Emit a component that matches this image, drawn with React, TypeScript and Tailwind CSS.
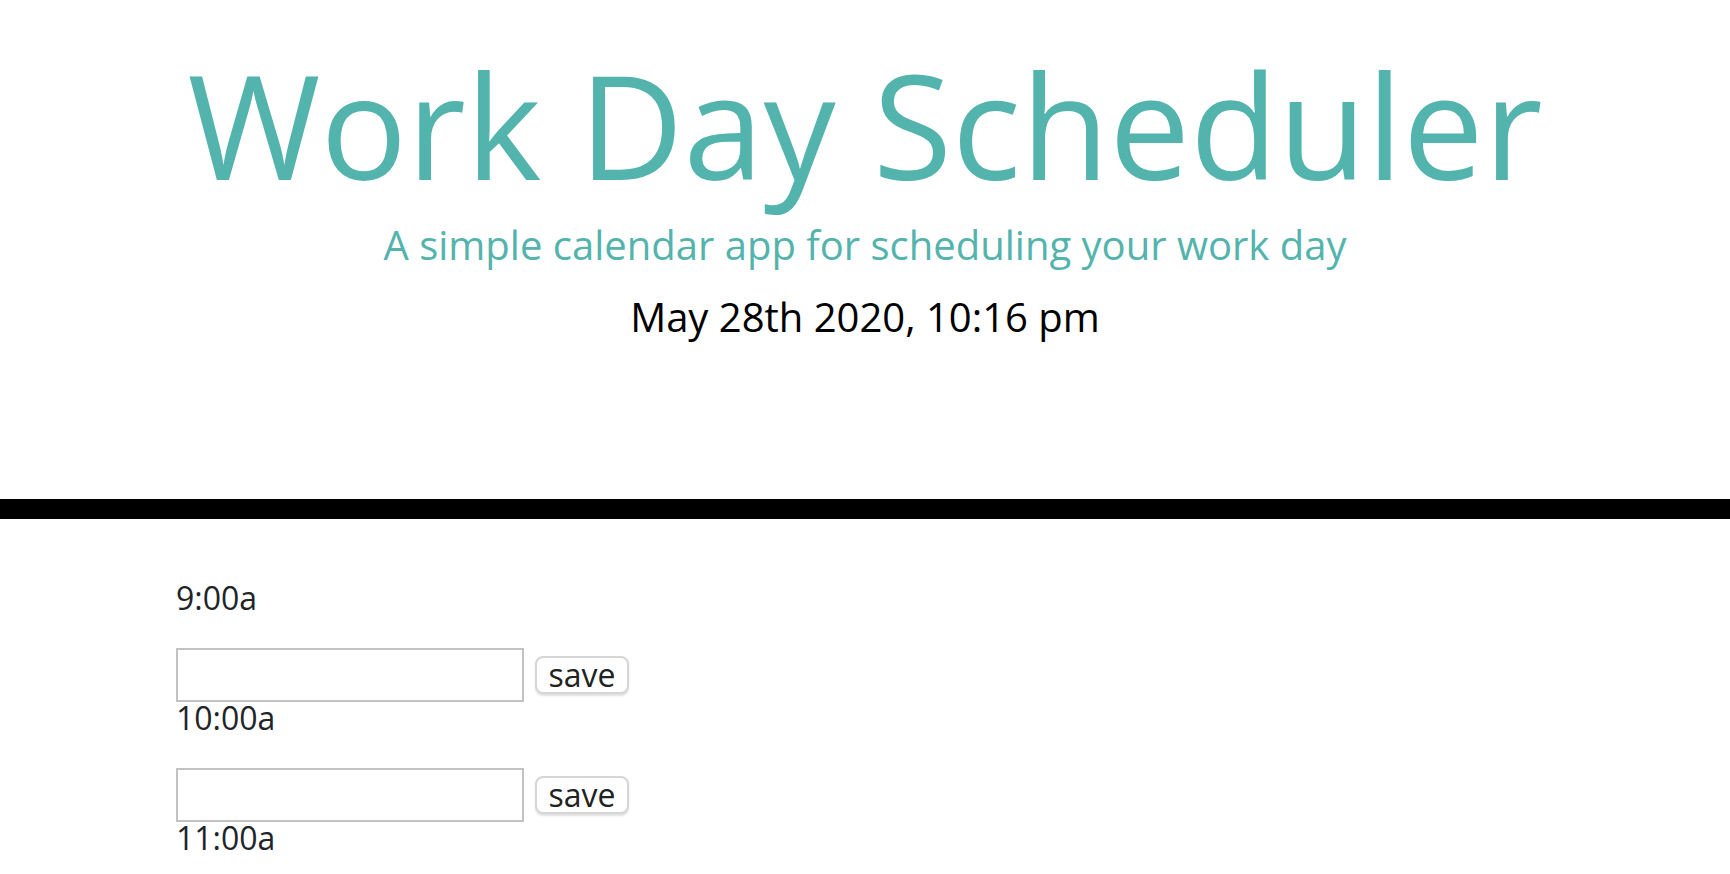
const hours = ['9:00a', '10:00a', '11:00a', '12:00p', '1:00p', '2:00p', '3:00p', '4:00p', '5:00p'];

function HourRow({ label }: { label: string }) {
  return (
    <div>
      <div className="text-[32px] leading-[32px] text-[#212529]">{label}</div>
      <div className="mt-[34px] flex items-center gap-[11px]">
        <input
          type="text"
          className="h-[54px] w-[348px] border-2 border-[#c2c2c2] bg-white px-2 text-[32px] outline-none"
        />
        <button className="h-[38px] w-[94px] rounded-[8px] border-2 border-[#d6d6d6] bg-white text-[32px] leading-none text-[#222] shadow-[0_2px_2px_rgba(0,0,0,0.12)]">
          save
        </button>
      </div>
    </div>
  );
}

export default function App() {
  return (
    <div className="min-h-screen bg-white" style={{ fontFamily: '"Open Sans", sans-serif' }}>
      <header className="h-[499px] pt-[38px] text-center">
        <h1 className="text-[144px] leading-[173px] font-normal text-[#53b3ad]">Work Day Scheduler</h1>
        <p className="mt-[4px] text-[40px] leading-[60px] text-[#53b3ad]">
          A simple calendar app for scheduling your work day
        </p>
        <p className="mt-[12px] text-[40px] leading-[60px] text-black">May 28th 2020, 10:16 pm</p>
      </header>
      <div className="h-[20px] bg-black"></div>
      <main className="pl-[176px] pt-[63px]">
        {hours.map((h) => (
          <HourRow key={h} label={h} />
        ))}
      </main>
    </div>
  );
}
